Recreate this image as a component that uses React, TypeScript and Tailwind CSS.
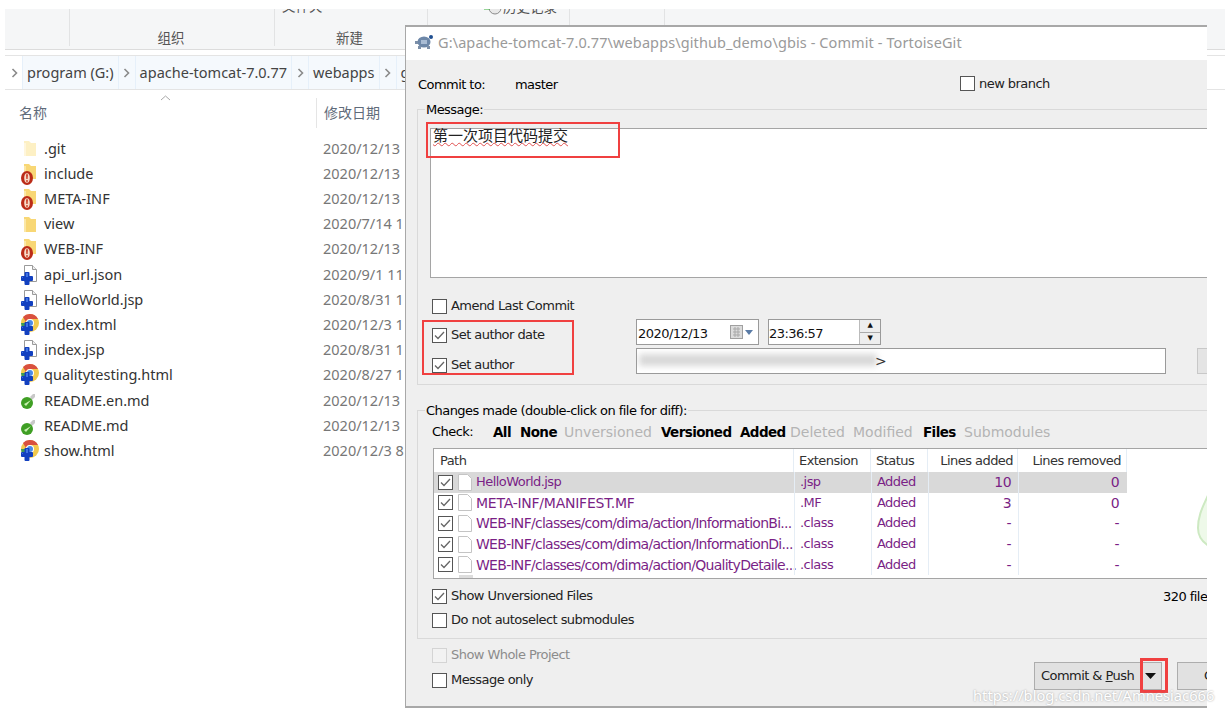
const sans = "font-['Noto_Sans','Noto_Sans_CJK_SC',sans-serif]";

const Folder = ({ pale }: { pale?: boolean }) => (
  <svg width="12" height="17" viewBox="0 0 12 17">
    <path d="M0 1h5l2 2h5v13H0z" fill={pale ? "#fdf0c4" : "#f8d775"} />
    <path d="M0 3h2v13H0z" fill={pale ? "#fff6dc" : "#fbe7a6"} />
  </svg>
);

const Doc = () => (
  <svg className="absolute left-[4px] top-0" width="13" height="17" viewBox="0 0 13 17">
    <path d="M.5.5h8l4 4v12H.5z" fill="#fff" stroke="#9a9a9a" />
    <path d="M8.5.5v4h4" fill="#eee" stroke="#9a9a9a" />
  </svg>
);

const BluePlus = () => (
  <svg className="absolute left-[1px] bottom-0" width="12" height="13" viewBox="0 0 12 13">
    <path d="M4.500 0h3a1 1 0 0 1 1 1v3h2.500a1 1 0 0 1 1 1v3a1 1 0 0 1-1 1H8.500v3a1 1 0 0 1-1 1h-3a1 1 0 0 1-1-1V9H1a1 1 0 0 1-1-1V5a1 1 0 0 1 1-1h2.500V1a1 1 0 0 1 1-1z" fill="#1240c0" />
    <path d="M5 1h2v4H2v1H1V5h4z" fill="#3f72e2" />
  </svg>
);

const AlertIcon = () => (
  <div className="relative w-[17px] h-[20px]">
    <div className="absolute left-[4px] top-[-1px]">
      <Folder />
    </div>
    <svg className="absolute left-[1px] bottom-[-1px]" width="12" height="14" viewBox="0 0 12 14">
      <ellipse cx="6" cy="7" rx="6" ry="7" fill="#bb2c18" />
      <ellipse cx="6" cy="7" rx="2.800" ry="4.800" fill="#f7dcc8" />
      <path d="M5.100 3.200h1.800l-.3 4.800H5.400z" fill="#c9351c" />
      <circle cx="6" cy="10" r=".9" fill="#c9351c" />
    </svg>
  </div>
);

const FileIcon = ({ kind }: { kind: string }) => {
  if (kind === "plain" || kind === "pale") {
    return (
      <div className="w-[17px] h-[20px] flex items-center justify-end pr-[1px]">
        <Folder pale={kind === "pale"} />
      </div>
    );
  }
  if (kind === "alert") return <AlertIcon />;
  if (kind === "doc") {
    return (
      <div className="relative w-[17px] h-[20px]">
        <Doc />
        <BluePlus />
      </div>
    );
  }
  if (kind === "chrome") {
    return (
      <div className="relative w-[19px] h-[20px]">
        <svg className="absolute left-[1px] top-[-1px]" width="18" height="18" viewBox="0 0 18 18">
          <circle cx="9" cy="9" r="9" fill="#f2c94c" />
          <path d="M9 0a9 9 0 0 1 8 5H9a4 4 0 0 0-4 3L2 3a9 9 0 0 1 7-3z" fill="#d9503f" />
          <path d="M0 9a9 9 0 0 0 6 8l3-5-4-3z" fill="#3f9b55" />
          <circle cx="9" cy="9" r="4" fill="#fff" />
          <circle cx="9" cy="9" r="3" fill="#4b8be8" />
        </svg>
        <BluePlus />
      </div>
    );
  }
  return (
    <div className="relative w-[17px] h-[20px]">
      <svg className="absolute left-[1px] bottom-[1px]" width="16" height="16" viewBox="0 0 16 16">
        <path d="M9 4l3-3h2v3l-3 3z" fill="#c8c8c8" />
        <circle cx="6" cy="10" r="6" fill="#3f9f24" />
        <path d="M3 11l2 2 5-6-5 3z" fill="#c8f0b0" />
      </svg>
    </div>
  );
};

const files = [
  { name: ".git", date: "2020/12/13", kind: "pale" },
  { name: "include", date: "2020/12/13", kind: "alert" },
  { name: "META-INF", date: "2020/12/13", kind: "alert" },
  { name: "view", date: "2020/7/14 1", kind: "plain" },
  { name: "WEB-INF", date: "2020/12/13", kind: "alert" },
  { name: "api_url.json", date: "2020/9/1 11", kind: "doc" },
  { name: "HelloWorld.jsp", date: "2020/8/31 1", kind: "doc" },
  { name: "index.html", date: "2020/12/3 1", kind: "chrome" },
  { name: "index.jsp", date: "2020/8/31 1", kind: "doc" },
  { name: "qualitytesting.html", date: "2020/8/27 1", kind: "chrome" },
  { name: "README.en.md", date: "2020/12/13", kind: "md" },
  { name: "README.md", date: "2020/12/13", kind: "md" },
  { name: "show.html", date: "2020/12/3 8", kind: "chrome" },
];

const Chevron = () => (
  <svg width="7" height="10" viewBox="0 0 7 10">
    <path d="M1.500 1l4 4-4 4" fill="none" stroke="#8a8a8a" strokeWidth="1.600" />
  </svg>
);

const Crumb = ({ label, last }: { label: string; last?: boolean }) => (
  <>
    <div className="h-full flex items-center px-[4px] bg-[#f5f9fd] border-x border-[#e6f0fa] text-[#444] text-[14.5px] whitespace-nowrap">
      {label}
    </div>
    {!last && (
      <div className="h-full w-[16px] flex items-center justify-center bg-[#f5f9fd]">
        <Chevron />
      </div>
    )}
  </>
);

const Explorer = () => (
  <div className={`${sans} pt-[9px] pl-[5px]`}>
    <div className="h-[41px] bg-[#f5f6f7] border-b border-[#dcdcdc] flex overflow-hidden">
      <div className="w-[65px] h-[37px] border-r border-[#e2e3e4]" />
      <div className="w-[205px] h-[37px] border-r border-[#e2e3e4] flex items-end justify-center text-[13.5px] text-[#555] leading-[17px]">
        <span className="mb-[-1px] -ml-[2px]">组织</span>
      </div>
      <div className="w-[153px] h-[37px] border-r border-[#e2e3e4] relative flex items-end pl-[61px] text-[13.5px] text-[#555] leading-[17px]">
        <span className="absolute left-[7px] top-[-11px] text-[#555]">文件夹</span>
        <span className="mb-[-1px]">新建</span>
      </div>
      <div className="w-[142px] h-[16px] border-r border-[#e2e3e4] relative">
        <svg className="absolute left-[56px] top-[-8px]" width="18" height="14" viewBox="0 0 18 14">
          <circle cx="11" cy="7" r="6" fill="#e8e8e8" stroke="#8a8a8a" />
          <path d="M0 7h6" stroke="#36b336" strokeWidth="3" />
        </svg>
        <span className="absolute left-[75px] top-[-10px] text-[13.500px] leading-[17px] text-[#555]">历史记录</span>
      </div>
      <div className="w-[95px] h-[16px] border-r border-[#e2e3e4]" />
    </div>
    <div className="mt-[5px] h-[35px] border-y border-[#e4e4e4] flex items-center pl-[17px] whitespace-nowrap overflow-hidden">
      <div className="absolute left-[11px] top-[68px]">
        <Chevron />
      </div>
      <Crumb label="program (G:)" />
      <Crumb label="apache-tomcat-7.0.77" />
      <Crumb label="webapps" />
      <Crumb label="g" last />
    </div>
    <div className="h-[37px] mt-[4px] flex relative text-[14px] text-[#5f6b7a] items-center">
      <svg className="absolute left-[155px] top-[1px]" width="11" height="6" viewBox="0 0 11 6">
        <path d="M1 5l4.500-4 4.500 4" fill="none" stroke="#a8a8a8" />
      </svg>
      <div className="w-[312px] pl-[14px] h-[30px] border-r border-[#e5e5e5] flex items-center">名称</div>
      <div className="pl-[7px]">修改日期</div>
    </div>
    <div className="mt-[5px] pl-[15px] flex flex-col">
      {files.map((f) => (
        <div key={f.name} className="h-[25.2px] flex items-center">
          <div className="w-[24px]">
            <FileIcon kind={f.kind} />
          </div>
          <div className="w-[279px] text-[14.5px] text-[#333]">{f.name}</div>
          <div className="text-[14.5px] text-[#777]">{f.date}</div>
        </div>
      ))}
    </div>
  </div>
);

const Check = ({ on, faint }: { on?: boolean; faint?: boolean }) => (
  <div
    className={`w-[15px] h-[15px] shrink-0 border flex items-center justify-center ${faint ? "border-[#d4d4d4] bg-[#f2f2f2]" : "border-[#555] bg-white"}`}
  >
    {on && (
      <svg width="11" height="9" viewBox="0 0 11 9">
        <path d="M1 4.500l3 3 6-6.500" fill="none" stroke="#666" strokeWidth="1.300" />
      </svg>
    )}
  </div>
);

const CheckRow = ({ label, on, faint, className }: { label: string; on?: boolean; faint?: boolean; className?: string }) => (
  <div className={`flex items-center gap-[4px] ${className ?? ""}`}>
    <Check on={on} faint={faint} />
    <span className={faint ? "text-[#8c8c8c]" : "text-[#222]"}>{label}</span>
  </div>
);

const rows = [
  { path: "HelloWorld.jsp", ext: ".jsp", added: "10", removed: "0", fit: "text-[13px]" },
  { path: "META-INF/MANIFEST.MF", ext: ".MF", added: "3", removed: "0", fit: "text-[14px] tracking-[-0.25px]" },
  { path: "WEB-INF/classes/com/dima/action/InformationBi...", ext: ".class", added: "-", removed: "-", fit: "text-[14px] tracking-[-0.72px]" },
  { path: "WEB-INF/classes/com/dima/action/InformationDi...", ext: ".class", added: "-", removed: "-", fit: "text-[14px] tracking-[-0.72px]" },
  { path: "WEB-INF/classes/com/dima/action/QualityDetaile...", ext: ".class", added: "-", removed: "-", fit: "text-[14px] tracking-[-0.72px]" },
];

const headCell = "h-[23px] flex items-center border-r border-[#e5edf5] text-[#333]";

const FileTable = () => (
  <div className="relative mt-[7px] ml-[15px] h-[131px] bg-white border border-[#a5a5a5] overflow-hidden text-[13px]">
    <div className="flex">
      <div className={`${headCell} w-[360px] pl-[6px]`}>Path</div>
      <div className={`${headCell} w-[77px] pl-[5px]`}>Extension</div>
      <div className={`${headCell} w-[57px] pl-[5px]`}>Status</div>
      <div className={`${headCell} w-[90px] justify-end pr-[4px]`}>Lines added</div>
      <div className={`${headCell} w-[109px] justify-end pr-[5px]`}>Lines removed</div>
    </div>
    {rows.map((r, i) => (
      <div key={r.path} className={`flex h-[20.6px] items-center w-[693px] text-[#7a1f86] ${i === 0 ? "bg-[#d9d9d9]" : ""}`}>
        <div className="w-[360px] flex items-center pl-[4px] h-full">
          <Check on />
          <svg className="ml-[5px] shrink-0" width="14" height="17" viewBox="0 0 14 17">
            <path d="M.5.500h9l4 4v12H.5z" fill="#fff" stroke="#c4c4c4" />
          </svg>
          <span className={`ml-[4px] whitespace-nowrap ${r.fit}`}>{r.path}</span>
        </div>
        <div className="w-[77px] pl-[5px] h-full flex items-center border-l border-[#e5edf5]">{r.ext}</div>
        <div className="w-[57px] pl-[5px] h-full flex items-center border-l border-[#e5edf5]">Added</div>
        <div className="w-[90px] pr-[7px] h-full flex items-center justify-end border-l border-[#e5edf5] text-[14px]">{r.added}</div>
        <div className="w-[109px] pr-[8px] h-full flex items-center justify-end border-l border-[#e5edf5] text-[14px]">{r.removed}</div>
      </div>
    ))}
    <div className="ml-[25px] w-[14px] h-[4px] bg-[#ddd]" />
    <svg className="absolute left-[762px] top-[41px]" width="30" height="64" viewBox="0 0 30 64">
      <path d="M14 0C10 12 2 22 2 38c0 12 8 20 28 24V0z" fill="#eef9e9" stroke="#cde9c2" strokeWidth="2" />
    </svg>
  </div>
);

const Dialog = () => (
  <div className="absolute left-[405px] top-[25px] w-[802px] h-[683px] overflow-hidden bg-[#efefef] border-t-2 border-l border-b-2 border-[#a8a8a8] font-['DejaVu_Sans','Noto_Sans_CJK_SC',sans-serif] text-[13px] leading-[18px] tracking-[-0.55px]">
    <div className="h-[33px] bg-white flex items-center pl-[9px] pb-[4px] gap-[4px] font-['Noto_Sans',sans-serif] text-[14.5px] tracking-[0.1px] text-[#9a9a9a] whitespace-nowrap">
      <svg width="19" height="16" viewBox="0 0 19 16">
        <ellipse cx="9" cy="8" rx="6.500" ry="5.500" fill="#6d87a8" />
        <path d="M6 6h6v4H6z" fill="#a9bcd4" />
        <circle cx="16" cy="3" r="2" fill="#1f4f90" />
        <path d="M3 12h3v3H3zM12 12h3v3h-3zM0 7h3v3H0z" fill="#7c8fa8" />
      </svg>
      G:\apache-tomcat-7.0.77\webapps\github_demo\gbis - Commit - TortoiseGit
    </div>
    <div className="flex items-center h-[49px] pl-[12px]">
      <span className="w-[97px]">Commit to:</span>
      <span className="w-[445px]">master</span>
      <CheckRow label="new branch" className="-mt-[2px]" />
    </div>

    <div className="relative ml-[11px] w-[900px] h-[276px] border border-[#d9d9d9] pl-[12px] pt-[18px]">
      <span className="absolute left-[7px] top-[-9px] bg-[#efefef] px-[1px]">Message:</span>
      <div className="h-[150px] bg-white border border-[#a5a5a5] pl-[2px] font-['Noto_Sans_CJK_SC',sans-serif] text-[15px] tracking-normal">
        <span className="relative top-[-3px] underline decoration-wavy decoration-[#e05050] decoration-1 text-[#222]">第一次项目代码提交</span>
      </div>
      <CheckRow label="Amend Last Commit" className="mt-[19px] ml-[2px]" />
      <div className="mt-[4px] ml-[2px] flex">
        <div className="w-[204px] flex flex-col gap-[12px] pt-[7px]">
          <CheckRow label="Set author date" on />
          <CheckRow label="Set author" on />
        </div>
        <div className="flex flex-col gap-[3px]">
          <div className="flex gap-[9px]">
            <div className="w-[123px] h-[26px] bg-white border border-[#9a9a9a] flex items-center pl-[1px] text-[#111]">
              <span className="flex-1 pt-[3px]">2020/12/13</span>
              <svg className="mr-[4px]" width="24" height="14" viewBox="0 0 24 14">
                <rect x=".5" y=".5" width="12" height="13" fill="#dcdcdc" stroke="#a0a0a0" />
                <path d="M3 4h7M3 7h7M3 10h7M5 2v10M8 2v10" stroke="#a9a9a9" />
                <path d="M15 5h8l-4 5z" fill="#5a7ba6" />
              </svg>
            </div>
            <div className="w-[113px] h-[26px] bg-white border border-[#9a9a9a] flex items-center text-[#111]">
              <span className="flex-1 pt-[3px]">23:36:57</span>
              <div className="w-[21px] h-full flex flex-col border-l border-[#bbb]">
                <div className="flex-1 bg-[#eee] border-b border-[#aaa] flex items-center justify-center text-[7px] leading-none">▲</div>
                <div className="flex-1 bg-[#eee] flex items-center justify-center text-[7px] leading-none">▼</div>
              </div>
            </div>
          </div>
          <div className="flex gap-[31px]">
            <div className="relative w-[530px] h-[26px] bg-white border border-[#9a9a9a] flex items-center overflow-hidden">
              <div className="absolute left-[2px] top-[5px] w-[238px] h-[12px] bg-[#d8d8d8] blur-[3px]" />
              <span className="absolute left-[238px] top-[3px] text-[14px] text-[#333]">&gt;</span>
            </div>
            <div className="w-[60px] h-[26px] bg-[#e4e4e4] border border-[#c8c8c8]" />
          </div>
        </div>
      </div>
    </div>

    <div className="relative ml-[11px] mt-[25px] w-[900px] h-[229px] border-t border-l border-b border-[#d9d9d9]">
      <span className="absolute left-[7px] top-[-9px] bg-[#efefef] px-[1px]">Changes made (double-click on file for diff):</span>
      <div className="pt-[12px] pl-[14px] flex items-center h-[30px] text-[14px] tracking-[0px] whitespace-nowrap">
        <span className="w-[61px] text-[13px] tracking-[-0.55px]">Check:</span>
        <span className="font-bold w-[27px] text-[13.5px] tracking-[-0.6px]">All</span>
        <span className="font-bold w-[44px] text-[13.5px] tracking-[-0.6px]">None</span>
        <span className="text-[#b4b4b4] w-[97px]">Unversioned</span>
        <span className="font-bold w-[79px] text-[13.5px] tracking-[-0.6px]">Versioned</span>
        <span className="font-bold w-[50px] text-[13.5px] tracking-[-0.6px]">Added</span>
        <span className="text-[#b4b4b4] w-[63px]">Deleted</span>
        <span className="text-[#b4b4b4] w-[70px]">Modified</span>
        <span className="font-bold w-[41px] text-[13.5px] tracking-[-0.6px]">Files</span>
        <span className="text-[#b4b4b4]">Submodules</span>
      </div>
      <FileTable />
      <div className="relative pl-[14px]">
        <CheckRow label="Show Unversioned Files" on className="mt-[8px]" />
        <CheckRow label="Do not autoselect submodules" className="mt-[6px]" />
        <span className="absolute left-[745px] top-[1px]">320 files</span>
      </div>
    </div>

    <div className="relative pl-[26px] pt-[7px]">
      <CheckRow label="Show Whole Project" faint />
      <CheckRow label="Message only" className="mt-[7px]" />
      <div className="absolute left-[628px] top-[23px] flex gap-[15px]">
        <div className="w-[128px] h-[28px] bg-[#e1e1e1] border border-[#adadad] flex items-center text-[#222]">
          <span className="w-[105px] pl-[6px]">
            Commit &amp; <span className="underline">P</span>ush
          </span>
          <svg width="11" height="6" viewBox="0 0 11 6" className="ml-[5px]">
            <path d="M0 0h11l-5.500 6z" fill="#111" />
          </svg>
        </div>
        <div className="w-[90px] h-[28px] bg-[#e1e1e1] border border-[#adadad] flex items-center pl-[26px] text-[#222]">Cancel</div>
      </div>
    </div>
  </div>
);

export default function App() {
  return (
    <div className="relative w-[1225px] h-[714px] bg-white overflow-hidden">
      <Explorer />
      <Dialog />
      {/* red annotation boxes drawn on top of the screenshot */}
      <div className="absolute left-[426px] top-[122px] w-[194px] h-[36px] border-[2px] border-[#f04040]" />
      <div className="absolute left-[422px] top-[320px] w-[152px] h-[55px] border-[2px] border-[#f04040]" />
      <div className="absolute left-[1140px] top-[658px] w-[28px] h-[35px] border-[3px] border-[#f04040]" />
      <div className="absolute left-[973px] top-[684px] font-['Noto_Sans',sans-serif] text-[14.7px] text-white [text-shadow:0_0_2px_#999] whitespace-nowrap">
        https://blog.csdn.net/Amnesiac666
      </div>
    </div>
  );
}
